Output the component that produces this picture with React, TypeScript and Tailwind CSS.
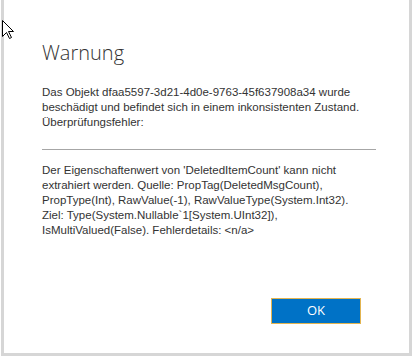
export default function App() {
  return (
    <div className="relative w-[413px] h-[357px] bg-white" style={{ fontFamily: '"Liberation Sans", Arial, sans-serif' }}>
      <div className="ml-px w-[411px] h-[356px] border-l-[3px] border-r-[3px] border-b-[3px] border-[#d6d6d6] bg-white flex flex-col pl-[38px] pr-[33px]">
        <h1 className="mt-[39px] text-[20px] font-light leading-[28px] text-[#333333] font-['Open_Sans',sans-serif]">Warnung</h1>
        <p className="mt-[18px] text-[11.5px] leading-[15px] text-[#333333] whitespace-nowrap">
          Das Objekt dfaa5597-3d21-4d0e-9763-45f637908a34 wurde
          <br />
          beschädigt und befindet sich in einem inkonsistenten Zustand.
          <br />
          Überprüfungsfehler:
        </p>
        <div className="mt-[19px] h-px bg-[#a6a6a6]" />
        <p className="mt-[13px] text-[11.5px] leading-[15px] text-[#333333] whitespace-nowrap">
          Der Eigenschaftenwert von 'DeletedItemCount' kann nicht
          <br />
          extrahiert werden. Quelle: PropTag(DeletedMsgCount),
          <br />
          PropType(Int), RawValue(-1), RawValueType(System.Int32).
          <br />
          Ziel: Type(System.Nullable`1[System.UInt32]),
          <br />
          IsMultiValued(False). Fehlerdetails: &lt;n/a&gt;
        </p>
        <div className="flex-1" />
        <div className="flex justify-end mb-[29px] pr-[15px]">
          <button className="w-[90px] h-[26px] bg-[#0072c6] border border-[#e2b450] text-white text-[13px] font-['Open_Sans',sans-serif]">
            OK
          </button>
        </div>
      </div>
      <svg className="absolute left-[2px] top-[20px]" width="13" height="20" viewBox="0 0 13 20">
        <path d="M0.5 0.5 L0.5 16.5 L4.5 12.5 L7.5 18.5 L9.5 17.5 L6.5 11.5 L11.5 11.5 Z" fill="#ffffff" stroke="#000000" strokeWidth="1" />
      </svg>
    </div>
  );
}
